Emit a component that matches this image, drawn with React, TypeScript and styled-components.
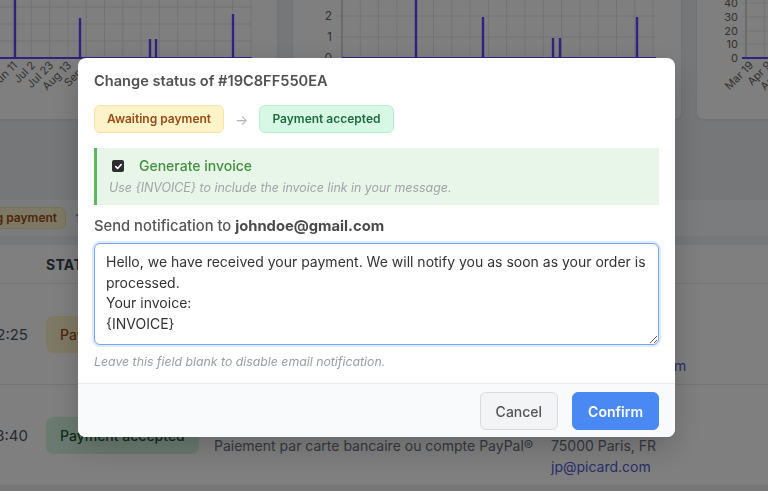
import React from 'react';
import styled, { createGlobalStyle, css } from 'styled-components';

const GlobalStyle = createGlobalStyle`
  html, body {
    margin: 0;
    padding: 0;
  }
  body {
    font-family: Inter, "Noto Sans", sans-serif;
    background: #eceef1;
    overflow: hidden;
  }
  * {
    box-sizing: border-box;
  }
`;

const Page = styled.div`
  height: 100vh;
  overflow: hidden;
`;

/* ---------- background dashboard ---------- */

const ChartRow = styled.div`
  display: grid;
  grid-template-columns: 297px 388px 300px;
  gap: 16px;
  margin: -40px 0 0 -20px;
`;

const ChartCard = styled.div`
  height: 159px;
  background: #fff;
  border-radius: 6px;
  box-shadow: 0 1px 3px rgba(0, 0, 0, 0.08);
  overflow: hidden;

  svg {
    display: block;
  }
`;

const FilterBar = styled.div`
  margin-top: 81px;
  height: 36px;
  background: #f7f8fa;
  display: flex;
  align-items: center;
  gap: 9px;
`;

const FilterTag = styled.span`
  margin-left: -56px;
  padding: 2px 8px;
  border-radius: 6px;
  background: #fdf3c8;
  border: 1px solid #f6e3a3;
  color: #9a4a16;
  font-size: 12px;
  font-weight: 600;
  line-height: 16px;
`;

const FilterCount = styled.span`
  color: #6366f1;
  font-size: 12px;
`;

const TableCard = styled.div`
  margin-top: 9px;
  background: #fff;
`;

const Row = styled.div<{ $header?: boolean }>`
  display: grid;
  grid-template-columns: 46px 168px 337px 1fr;
  align-items: center;
  border-bottom: 1px solid #e7e8eb;
  height: ${(p) => (p.$header ? '39px' : '101px')};
  font-size: 14px;
  line-height: 21px;
  color: #6b7280;
`;

const HeadCell = styled.div`
  font-size: 14px;
  font-weight: 700;
  color: #374151;
  letter-spacing: 0.3px;
`;

const TimeCell = styled.div`
  display: flex;
  justify-content: flex-end;
  padding-right: 18px;
  white-space: nowrap;
  font-size: 15px;
  color: #4b5563;
`;

const Cell = styled.div`
  white-space: nowrap;
`;

const RowPill = styled.span<{ $tone: 'pending' | 'accepted' }>`
  display: inline-block;
  padding: 8px 14px;
  border-radius: 7px;
  font-size: 14px;
  font-weight: 500;
  line-height: 21px;
  ${(p) =>
    p.$tone === 'pending'
      ? css`
          background: #fdf3c8;
          color: #9a4a16;
        `
      : css`
          background: #d5f5e0;
          color: #1c5b38;
        `}
`;

const Link = styled.div`
  color: #4f5bd5;
`;

/* ---------- modal ---------- */

const Backdrop = styled.div`
  position: fixed;
  inset: 0;
  background: rgba(0, 0, 0, 0.5);
  display: flex;
  align-items: center;
  justify-content: center;
  padding: 4px 15px 0 0;
`;

const Modal = styled.div`
  width: 597px;
  background: #fff;
  border-radius: 8px;
  overflow: hidden;
  box-shadow: 0 10px 30px rgba(0, 0, 0, 0.2);
`;

const ModalBody = styled.div`
  padding: 12px 16px 13px;
`;

const Title = styled.h2`
  margin: 0;
  font-size: 14.6px;
  font-weight: 600;
  line-height: 22px;
  color: #515151;
`;

const StatusFlow = styled.div`
  display: flex;
  align-items: center;
  gap: 11px;
  margin-top: 13px;
`;

const StatusPill = styled.span<{ $tone: 'pending' | 'accepted' }>`
  padding: 4px 12px;
  border-radius: 6px;
  font-size: 12px;
  font-weight: 600;
  line-height: 18px;
  ${(p) =>
    p.$tone === 'pending'
      ? css`
          background: #fdf3c8;
          border: 1px solid #f8e2a0;
          color: #9a4a16;
        `
      : css`
          background: #d8f8e6;
          border: 1px solid #b9efd0;
          color: #1f6b41;
        `}
`;

const Arrow = styled.span`
  color: #b5b5b5;
  font-size: 14px;
`;

const InvoiceBox = styled.div`
  margin-top: 15px;
  background: #e8f5e9;
  border-left: 3px solid #5cb85c;
  padding: 8px 12px 9px;
`;

const CheckRow = styled.label`
  display: flex;
  align-items: center;
  gap: 15px;
  line-height: 20px;
  font-size: 14px;
  font-weight: 500;
  color: #43903f;
`;

const CheckBox = styled.span`
  width: 12px;
  height: 12px;
  margin-left: 3px;
  border-radius: 2px;
  background: #2e2e2e;
  display: flex;
  align-items: center;
  justify-content: center;
`;

const Hint = styled.div`
  margin-top: 4px;
  font-size: 12.4px;
  line-height: 16px;
  font-style: italic;
  color: #a0a4a8;
`;

const NotifyLabel = styled.div`
  margin-top: 11px;
  font-size: 14.75px;
  line-height: 20px;
  font-weight: 500;
  color: #555;

  strong {
    font-weight: 700;
    color: #4a4a4a;
  }
`;

const Message = styled.textarea`
  display: block;
  width: 100%;
  height: 102px;
  margin-top: 7px;
  padding: 8px 11px;
  border: 1px solid #78a3f6;
  border-radius: 6px;
  box-shadow: 0 0 0 2px rgba(59, 130, 246, 0.16);
  font-family: Inter, "Noto Sans", sans-serif;
  font-size: 14px;
  line-height: 20.6px;
  color: #333;
  outline: none;
  resize: vertical;
`;

const HelpText = styled.div`
  margin-top: 9px;
  font-size: 12.3px;
  line-height: 16px;
  font-style: italic;
  color: #9a9ea3;
`;

const Footer = styled.div`
  display: flex;
  justify-content: flex-end;
  gap: 14px;
  padding: 8px 16px 7px;
  border-top: 1px solid #e9eaec;
  background: #f9fafb;
`;

const Button = styled.button<{ $primary?: boolean }>`
  height: 38px;
  padding: 0 16px;
  border-radius: 6px;
  font-family: Inter, "Noto Sans", sans-serif;
  font-size: 14px;
  cursor: pointer;
  ${(p) =>
    p.$primary
      ? css`
          padding: 0 15px;
          background: #4a89f3;
          border: 1px solid #4a89f3;
          color: #fff;
          font-weight: 600;
        `
      : css`
          padding: 0 15px;
          background: #f3f4f6;
          border: 1px solid #dadbdd;
          color: #555;
          font-weight: 500;
        `}
`;

/* ---------- chart drawings ---------- */

const GRID = '#e6e6e6';
const LINE = '#6244ff';
const LABEL = '#666';

const range = (from: number, to: number, step: number) => {
  const out: number[] = [];
  for (let v = from; v <= to; v += step) out.push(v);
  return out;
};

const Series = ({ start, end, peaks }: { start: number; end: number; peaks: [number, number][] }) => (
  <>
    <line x1={start} x2={end} y1={58} y2={58} stroke={LINE} strokeWidth={2} />
    {peaks.map(([x, y]) => (
      <line key={x} x1={x} x2={x} y1={58} y2={y} stroke={LINE} strokeWidth={2.4} />
    ))}
  </>
);

const XLabels = ({ items }: { items: [number, string][] }) => (
  <>
    {items.map(([x, t]) => (
      <text
        key={t}
        x={x + 4}
        y={66}
        fontSize={11}
        fill={LABEL}
        textAnchor="end"
        transform={`rotate(-45 ${x + 4} 66)`}
      >
        {t}
      </text>
    ))}
  </>
);

const ChartOne = () => (
  <svg width={297} height={159}>
    <g transform="translate(20 40)">
      {range(13, 252, 18.3).map((x) => (
        <line key={x} x1={x} x2={x} y1={-40} y2={58} stroke={GRID} />
      ))}
      {[-27, -10, 7, 24, 41].map((y) => (
        <line key={y} x1={-20} x2={252} y1={y} y2={y} stroke={GRID} />
      ))}
      <Series
        start={-20}
        end={252}
        peaks={[
          [15, -40],
          [80, 18],
          [150, 39],
          [156, 39],
          [233, 14],
        ]}
      />
      <XLabels
        items={[
          [14, 'Jun 11'],
          [32, 'Jul 2'],
          [50, 'Jul 23'],
          [68, 'Aug 13'],
          [86, 'Sep 3'],
        ]}
      />
    </g>
  </svg>
);

const ChartTwo = () => (
  <svg width={388} height={159}>
    <g transform="translate(-293 40)">
      {range(342, 656, 18.3).map((x) => (
        <line key={x} x1={x} x2={x} y1={-40} y2={58} stroke={GRID} />
      ))}
      {[-26, -5, 16, 37].map((y) => (
        <line key={y} x1={336} x2={656} y1={y} y2={y} stroke={GRID} />
      ))}
      <line x1={342} x2={342} y1={-40} y2={58} stroke="#bbb" />
      {[
        [16, '2'],
        [37, '1'],
        [58, '0'],
      ].map(([y, t]) => (
        <text key={t} x={332} y={Number(y) + 4} fontSize={12} fill={LABEL} textAnchor="end">
          {t}
        </text>
      ))}
      <Series
        start={342}
        end={656}
        peaks={[
          [416, -40],
          [483, 17],
          [553, 38],
          [560, 38],
          [637, 17],
        ]}
      />
    </g>
  </svg>
);

const ChartThree = () => (
  <svg width={300} height={159}>
    <g transform="translate(-697 40)">
      {range(746, 1000, 18.3).map((x) => (
        <line key={x} x1={x} x2={x} y1={-40} y2={58} stroke={GRID} />
      ))}
      {[3, 17, 31, 44].map((y) => (
        <line key={y} x1={742} x2={1000} y1={y} y2={y} stroke={GRID} />
      ))}
      <line x1={746} x2={746} y1={-40} y2={58} stroke="#bbb" />
      {[
        [3, '40'],
        [17, '30'],
        [31, '20'],
        [44, '10'],
        [58, '0'],
      ].map(([y, t]) => (
        <text key={t} x={738} y={Number(y) + 4} fontSize={11} fill={LABEL} textAnchor="end">
          {t}
        </text>
      ))}
      <line x1={742} x2={1000} y1={58} y2={58} stroke={LINE} strokeWidth={2} />
      <XLabels
        items={[
          [750, 'Mar 19'],
          [768, 'Apr 9'],
          [786, 'Apr 30'],
        ]}
      />
    </g>
  </svg>
);

const message =
  'Hello, we have received your payment. We will notify you as soon as your order is processed.\nYour invoice:\n{INVOICE}';

const App = () => {
  return (
    <>
      <GlobalStyle />
      <Page>
        <ChartRow>
          <ChartCard>
            <ChartOne />
          </ChartCard>
          <ChartCard>
            <ChartTwo />
          </ChartCard>
          <ChartCard>
            <ChartThree />
          </ChartCard>
        </ChartRow>

        <FilterBar>
          <FilterTag>Awaiting payment</FilterTag>
          <FilterCount>1</FilterCount>
        </FilterBar>

        <TableCard>
          <Row $header>
            <div />
            <HeadCell>STATUS</HeadCell>
            <HeadCell>DELIVERY</HeadCell>
            <HeadCell>CUSTOMER</HeadCell>
          </Row>
          <Row>
            <TimeCell>2024-06-11 12:25</TimeCell>
            <Cell>
              <RowPill $tone="pending">Payment pending</RowPill>
            </Cell>
            <Cell>
              <div>Colissimo - Domicile</div>
              <div>Virement bancaire</div>
            </Cell>
            <Cell>
              <div>John Doe</div>
              <div>3 rue Lafayette</div>
              <div>69002 Lyon, FR</div>
              <Link>johndoe@gmail.com</Link>
            </Cell>
          </Row>
          <Row>
            <TimeCell>2024-06-10 13:40</TimeCell>
            <Cell>
              <RowPill $tone="accepted">Payment accepted</RowPill>
            </Cell>
            <Cell>
              <div>Fedex - International Priority</div>
              <div>Paiement par carte bancaire ou compte PayPal®</div>
            </Cell>
            <Cell>
              <div>Jean Picard</div>
              <div>5 rue de Rivoli</div>
              <div>75000 Paris, FR</div>
              <Link>jp@picard.com</Link>
            </Cell>
          </Row>
        </TableCard>

        <Backdrop>
          <Modal>
            <ModalBody>
              <Title>Change status of #19C8FF550EA</Title>
              <StatusFlow>
                <StatusPill $tone="pending">Awaiting payment</StatusPill>
                <Arrow>→</Arrow>
                <StatusPill $tone="accepted">Payment accepted</StatusPill>
              </StatusFlow>
              <InvoiceBox>
                <CheckRow>
                  <CheckBox>
                    <svg width="9" height="9" viewBox="0 0 10 10">
                      <path d="M2 5.2l2 2 4-4.4" fill="none" stroke="#fff" strokeWidth="1.8" strokeLinecap="round" strokeLinejoin="round" />
                    </svg>
                  </CheckBox>
                  Generate invoice
                </CheckRow>
                <Hint>Use {'{INVOICE}'} to include the invoice link in your message.</Hint>
              </InvoiceBox>
              <NotifyLabel>
                Send notification to <strong>johndoe@gmail.com</strong>
              </NotifyLabel>
              <Message defaultValue={message} />
              <HelpText>Leave this field blank to disable email notification.</HelpText>
            </ModalBody>
            <Footer>
              <Button>Cancel</Button>
              <Button $primary>Confirm</Button>
            </Footer>
          </Modal>
        </Backdrop>
      </Page>
    </>
  );
};

export default App;
